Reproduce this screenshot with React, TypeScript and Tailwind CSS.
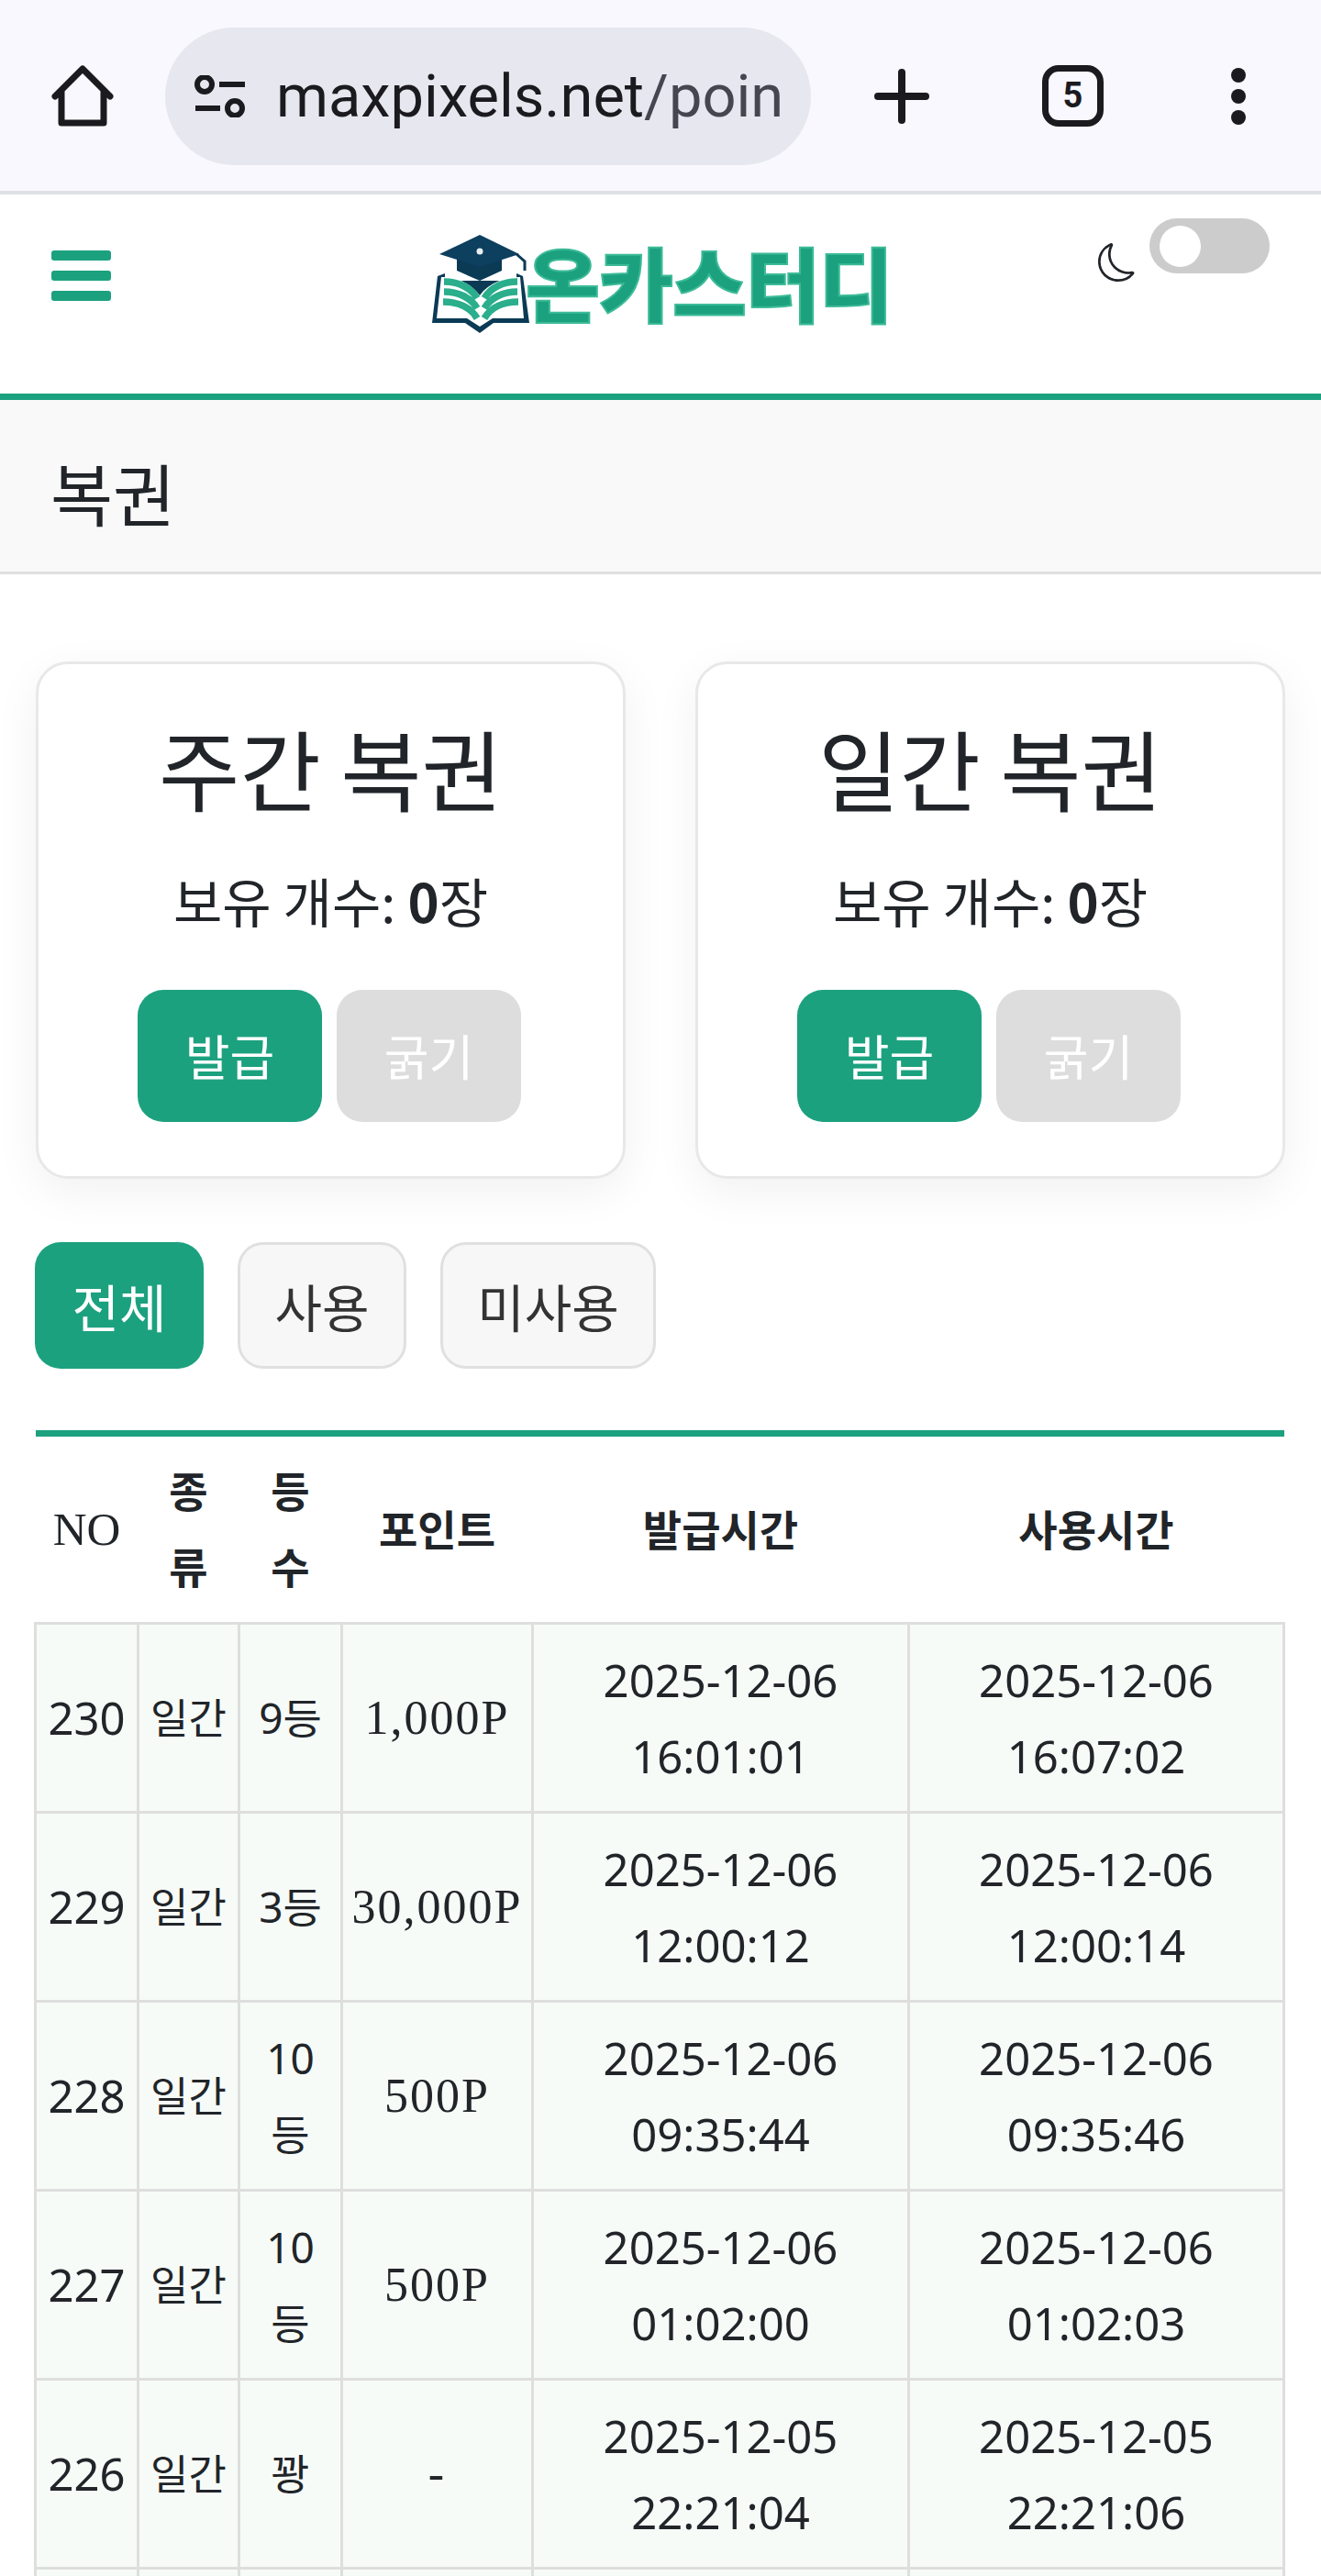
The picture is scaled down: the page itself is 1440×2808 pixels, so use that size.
import { BsMoon } from "react-icons/bs";

const sans = "font-['Noto_Sans','Noto_Sans_CJK_KR',sans-serif]";
const korean = "font-['Noto_Sans_CJK_KR','Noto_Sans',sans-serif]";

type Row = {
    no: string;
    grade: string[];
    point: string;
    issued: string[];
    used: string[];
};

const rows: Row[] = [
    { no: '230', grade: ['9등'], point: '1,000P', issued: ['2025-12-06', '16:01:01'], used: ['2025-12-06', '16:07:02'] },
    { no: '229', grade: ['3등'], point: '30,000P', issued: ['2025-12-06', '12:00:12'], used: ['2025-12-06', '12:00:14'] },
    { no: '228', grade: ['10', '등'], point: '500P', issued: ['2025-12-06', '09:35:44'], used: ['2025-12-06', '09:35:46'] },
    { no: '227', grade: ['10', '등'], point: '500P', issued: ['2025-12-06', '01:02:00'], used: ['2025-12-06', '01:02:03'] },
    { no: '226', grade: ['꽝'], point: '-', issued: ['2025-12-05', '22:21:04'], used: ['2025-12-05', '22:21:06'] },
];

function Lines({ items }: { items: string[] }) {
    return (
        <>
            {items.map((line, i) => (
                <div key={i}>{line}</div>
            ))}
        </>
    );
}

function BrowserBar() {
    return (
        <div className="flex h-[212px] items-start border-b-[4px] border-[#e0e1e6] bg-[#f8f8fe]">
            <svg className="ml-[56px] mt-[71px] h-[67px] w-[68px]" viewBox="0 0 68 67" fill="none" stroke="#1b1b1f" strokeWidth="7" strokeLinejoin="round" strokeLinecap="round">
                <path d="M4 34 L34 4 L64 34 M11 28 V63 H57 V28" />
            </svg>
            <div className="ml-[56px] mt-[30px] flex h-[150px] w-[704px] items-center rounded-full bg-[#e7e7ef] pl-[32px]">
                <svg className="h-[46px] w-[55px] shrink-0" viewBox="0 0 55 46" fill="none" stroke="#1b1b1f" strokeWidth="6">
                    <circle cx="11" cy="10" r="8" />
                    <path d="M27 10 H55" />
                    <path d="M1 36 H28" />
                    <circle cx="44" cy="36" r="8" />
                </svg>
                <div className="ml-[34px] whitespace-nowrap font-['Roboto',sans-serif] text-[65px] leading-[80px] text-[#1b1b1f]">
                    maxpixels.net<span className="text-[#45464f]">/poin</span>
                </div>
            </div>
            <svg className="ml-[69px] mt-[75px] h-[60px] w-[60px]" viewBox="0 0 60 60" fill="none" stroke="#1b1b1f" strokeWidth="8" strokeLinecap="round">
                <path d="M4 30 H56 M30 4 V56" />
            </svg>
            <div className="ml-[123px] mt-[71px] flex h-[67px] w-[67px] items-center justify-center rounded-[18px] border-[7px] border-[#1b1b1f] font-['Roboto',sans-serif] text-[38px] font-bold text-[#1b1b1f]">
                5
            </div>
            <div className="ml-[139px] mt-[74px] flex flex-col gap-[7px]">
                <div className="h-[16px] w-[16px] rounded-full bg-[#1b1b1f]" />
                <div className="h-[16px] w-[16px] rounded-full bg-[#1b1b1f]" />
                <div className="h-[16px] w-[16px] rounded-full bg-[#1b1b1f]" />
            </div>
        </div>
    );
}

function LogoMark() {
    return (
        <svg className="h-[107px] w-[106px] shrink-0" viewBox="0 0 106 107">
            <path d="M6 45 L0 96 L36 96 L52 107 L67 96 L106 96 L99 45 L92 42 L92 50 L14 50 L14 42 Z" fill="#0b3a55" />
            <path d="M10 46 C26 46 42 52 52 66 C62 52 80 46 96 46 L100 91 L66 91 L52 100 L38 91 L5 91 Z" fill="#ffffff" />
            <g fill="none" stroke="#2aae8c" strokeWidth="7.5">
                <path d="M13 51 C28 51 42 57 49 69" />
                <path d="M13 62 C28 62 42 68 49 80" />
                <path d="M12 73 C28 73 42 79 49 91" />
                <path d="M93 51 C78 51 64 57 57 69" />
                <path d="M93 62 C78 62 64 68 57 80" />
                <path d="M94 73 C78 73 64 79 57 91" />
            </g>
            <path d="M27 27 V39 L52 50 L76 39 V27 Z" fill="#0b3a55" />
            <path d="M52 0 L95 21 L52 35 L8 21 Z" fill="#0d3f5f" />
            <circle cx="52" cy="18" r="3.5" fill="#e8eef2" />
            <path d="M92 21 L101 29 V39" fill="none" stroke="#0b3a55" strokeWidth="3" />
        </svg>
    );
}

function Header() {
    return (
        <div className="flex h-[224px] items-start border-b-[7px] border-[#1ca17f] bg-white">
            <div className="ml-[56px] mt-[61px] flex flex-col gap-[11px]">
                <div className="h-[11px] w-[65px] rounded-[3px] bg-[#1ca17f]" />
                <div className="h-[11px] w-[65px] rounded-[3px] bg-[#1ca17f]" />
                <div className="h-[11px] w-[65px] rounded-[3px] bg-[#1ca17f]" />
            </div>
            <div className="ml-[350px] mt-[44px] flex items-center">
                <LogoMark />
                <span className={`-ml-[4px] -mt-[8px] whitespace-nowrap ${korean} text-[88px] font-black leading-[107px] tracking-[-1px] text-[#1ca17f] [-webkit-text-stroke:2px_#3dbb98]`}>
                    온카스터디
                </span>
            </div>
            <BsMoon className="ml-auto mt-[53px] text-[42px] text-[#212529]" />
            <div className="ml-[14px] mr-[56px] mt-[26px] flex h-[60px] w-[131px] items-center rounded-full bg-[#cccccc] pl-[11px]">
                <div className="h-[45px] w-[45px] rounded-full bg-white" />
            </div>
        </div>
    );
}

function LotteryCard({ title }: { title: string }) {
    return (
        <div className="flex w-[643px] flex-col items-center rounded-[35px] border-[3px] border-[#e8e8e8] bg-white pb-[59px] pt-[52px] shadow-[0_14px_50px_rgba(0,0,0,0.06)]">
            <h2 className={`${korean} text-[96px] font-normal leading-[120px] text-[#212529]`}>{title}</h2>
            <p className={`${korean} mt-[43px] text-[58px] leading-[84px] text-[#212529]`}>
                보유 개수: <b className="font-bold">0</b>장
            </p>
            <div className={`${korean} -ml-[3px] mt-[56px] flex gap-[16px]`}>
                <button className="h-[144px] w-[201px] rounded-[28px] bg-[#1ca17f] text-[53px] text-white">발급</button>
                <button className="h-[144px] w-[201px] rounded-[28px] bg-[#dddddd] text-[53px] text-white">굵기</button>
            </div>
        </div>
    );
}

function FilterTabs() {
    return (
        <div className={`${korean} -ml-[1px] mt-[69px] flex gap-[37px]`}>
            <button className="h-[138px] w-[184px] rounded-[28px] bg-[#1ca17f] text-[56px] text-white">전체</button>
            <button className="h-[138px] w-[184px] rounded-[28px] border-[3px] border-[#e0e0e0] bg-[#f7f7f7] text-[56px] text-[#333333]">사용</button>
            <button className="h-[138px] w-[235px] rounded-[28px] border-[3px] border-[#e0e0e0] bg-[#f7f7f7] text-[56px] text-[#333333]">미사용</button>
        </div>
    );
}

function LotteryTable() {
    const td = "border-[3px] border-[#dedede] bg-[#f7fbf8] text-center align-middle";
    const serif = "font-['Liberation_Serif',serif] text-[52px] tracking-[2px]";
    return (
        <table className="-ml-[2px] mt-[67px] w-[1361px] table-fixed border-collapse border-t-[7px] border-t-[#1ca17f] text-[49px] leading-[83px] text-[#212529]">
            <colgroup>
                <col className="w-[112px]" />
                <col className="w-[110px]" />
                <col className="w-[112px]" />
                <col className="w-[208px]" />
                <col className="w-[410px]" />
                <col className="w-[409px]" />
            </colgroup>
            <thead>
                <tr className="h-[207px] text-[46px]">
                    <th className="font-['Liberation_Serif',serif] text-[51px] font-normal">NO</th>
                    <th className="font-bold"><Lines items={['종', '류']} /></th>
                    <th className="font-bold"><Lines items={['등', '수']} /></th>
                    <th className="font-bold">포인트</th>
                    <th className="font-bold">발급시간</th>
                    <th className="font-bold">사용시간</th>
                </tr>
            </thead>
            <tbody>
                {rows.map((row) => (
                    <tr key={row.no} className="h-[206px]">
                        <td className={td}>{row.no}</td>
                        <td className={`${td} text-[45px]`}>일간</td>
                        <td className={`${td} text-[46px]`}><Lines items={row.grade} /></td>
                        <td className={`${td} ${serif}`}>{row.point}</td>
                        <td className={td}><Lines items={row.issued} /></td>
                        <td className={td}><Lines items={row.used} /></td>
                    </tr>
                ))}
                <tr className="h-[206px]">
                    <td className={td} />
                    <td className={td} />
                    <td className={td} />
                    <td className={td} />
                    <td className={td} />
                    <td className={td} />
                </tr>
            </tbody>
        </table>
    );
}

export default function App() {
    return (
        <main className={`h-[2808px] w-[1440px] overflow-hidden bg-white ${sans}`}>
            <BrowserBar />
            <Header />
            <div className={`${korean} flex h-[190px] items-center border-b-[3px] border-[#e0e0e0] bg-[#f9f9f9] pl-[55px] pt-[12px] text-[74px] text-[#212529]`}>
                복권
            </div>
            <div className="px-[39px] pt-[95px]">
                <div className="flex justify-between">
                    <LotteryCard title="주간 복권" />
                    <LotteryCard title="일간 복권" />
                </div>
                <FilterTabs />
                <LotteryTable />
            </div>
        </main>
    );
}
